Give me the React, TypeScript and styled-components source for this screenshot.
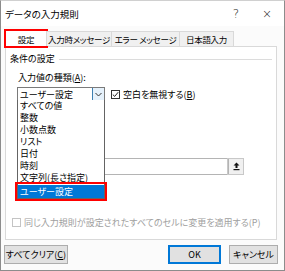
import React from 'react';
import styled, { createGlobalStyle } from 'styled-components';

const GlobalStyle = createGlobalStyle`
  html, body { margin: 0; padding: 0; background: #fff; }
  body {
    font-family: "Noto Sans CJK JP", "Noto Sans", sans-serif;
    font-size: 9px;
    color: #000;
    font-feature-settings: "palt";
  }
`;

const Dialog = styled.div`
  width: 285px;
  height: 271px;
  box-sizing: border-box;
  border: 1px solid #8c8c8c;
  border-top-color: #d0d0d0;
  background: #fbfbfb;
  display: flex;
  flex-direction: column;
`;

const TitleBar = styled.div`
  height: 25px;
  background: #fff;
  display: flex;
  align-items: center;
  padding-left: 4px;
  font-size: 9.5px;
`;

const TitleText = styled.div`
  flex: 1;
`;

const TitleButton = styled.div<{ $w: number }>`
  width: ${p => p.$w}px;
  text-align: center;
  font-size: 12px;
  font-family: "DejaVu Sans", sans-serif;
  font-weight: 300;
  color: #222;
`;

const TabRow = styled.div`
  height: 20px;
  display: flex;
  align-items: flex-end;
  padding-left: 5px;
  position: relative;
  z-index: 1;
`;

const Tab = styled.div<{ $w: number; $active?: boolean }>`
  width: ${p => p.$w}px;
  height: ${p => (p.$active ? 17 : 15)}px;
  box-sizing: border-box;
  display: flex;
  align-items: center;
  justify-content: center;
  background: ${p => (p.$active ? '#fff' : '#f0f0f0')};
  border: 1px solid #d9d9d9;
  border-bottom: none;
  margin-bottom: ${p => (p.$active ? -1 : 0)}px;
  margin-left: -1px;
  white-space: nowrap;
  font-size: 8.5px;
  letter-spacing: -0.3px;
  outline: ${p => (p.$active ? '2px solid #f00' : 'none')};
  outline-offset: -1px;
`;

const Panel = styled.div`
  margin-left: 4px;
  width: 272px;
  height: 194px;
  box-sizing: border-box;
  background: #fff;
  border: 1px solid #d9d9d9;
  position: relative;
  display: flex;
  flex-direction: column;
`;

const GroupTitle = styled.div`
  display: flex;
  align-items: center;
  margin-top: 6px;
  padding: 0 4px;
  line-height: 12px;
  &::after {
    content: '';
    flex: 1;
    height: 1px;
    background: #dcdcdc;
    margin-left: 4px;
  }
`;

const Label = styled.div`
  margin-top: 7px;
  padding-left: 12px;
  line-height: 12px;
`;

const Key = styled.span`
  text-decoration: underline;
`;

const ComboRow = styled.div`
  display: flex;
  align-items: center;
  margin-top: 3px;
  padding-left: 11px;
  gap: 6px;
`;

const Combo = styled.div`
  width: 88px;
  height: 14px;
  box-sizing: border-box;
  border: 1px solid #7a7a7a;
  display: flex;
  align-items: center;
  position: relative;
`;

const ComboText = styled.div`
  flex: 1;
  padding-left: 2px;
`;

const ComboArrow = styled.div`
  width: 12px;
  height: 12px;
  box-sizing: border-box;
  background: #e5f1fb;
  border-left: 1px solid #3c7fb1;
  display: flex;
  align-items: center;
  justify-content: center;
`;

const CheckRow = styled.label<{ $disabled?: boolean }>`
  display: flex;
  align-items: center;
  gap: 3px;
  white-space: nowrap;
  color: ${p => (p.$disabled ? '#a0a0a0' : '#000')};
`;

const Box = styled.span<{ $disabled?: boolean }>`
  width: 9px;
  height: 9px;
  box-sizing: border-box;
  border: 1px solid ${p => (p.$disabled ? '#c4c4c4' : '#333')};
  background: #fff;
  display: flex;
  align-items: center;
  justify-content: center;
`;

const DropList = styled.div`
  position: absolute;
  left: 11px;
  top: 53px;
  width: 88px;
  box-sizing: border-box;
  border: 1px solid #646464;
  border-top: none;
  background: #fff;
  z-index: 2;
`;

const ListItem = styled.div<{ $selected?: boolean }>`
  height: 12px;
  line-height: 12px;
  padding-left: 2px;
  white-space: nowrap;
  background: ${p => (p.$selected ? '#0078d7' : 'transparent')};
  color: ${p => (p.$selected ? '#fff' : '#000')};
  outline: ${p => (p.$selected ? '2px solid #f00' : 'none')};
  outline-offset: 1px;
  position: relative;
  ${p => (p.$selected ? 'margin-top: 1px; height: 13px; line-height: 13px;' : '')}
`;

const SourceInput = styled.div`
  margin-top: 57px;
  margin-left: 11px;
  width: 227px;
  height: 17px;
  box-sizing: border-box;
  border: 1px solid #b4b4b4;
  display: flex;
  justify-content: flex-end;
  align-items: stretch;
`;

const RefButton = styled.div`
  width: 15px;
  box-sizing: border-box;
  border-left: 1px solid #b4b4b4;
  background: #f0f0f0;
  outline: 1px solid #c8c8c8;
  display: flex;
  align-items: center;
  justify-content: center;
`;

const ApplyRow = styled.div`
  margin-top: auto;
  margin-bottom: 10px;
  padding-left: 6px;
`;

const Footer = styled.div`
  display: flex;
  align-items: center;
  gap: 8px;
  padding: 5px 6px 0 3px;
`;

const Button = styled.div<{ $w: number; $default?: boolean }>`
  width: ${p => p.$w}px;
  height: 19px;
  box-sizing: border-box;
  border: 1px solid ${p => (p.$default ? '#0078d7' : '#adadad')};
  background: #e1e1e1;
  display: flex;
  align-items: center;
  justify-content: center;
  white-space: nowrap;
  box-shadow: ${p => (p.$default ? 'inset 0 0 0 1px #0078d7' : 'none')};
`;

const Spacer = styled.div`
  flex: 1;
`;

const Check = () => (
  <svg width="7" height="7" viewBox="0 0 7 7">
    <path d="M0.8 3.6 L2.7 5.4 L6.2 1.2" fill="none" stroke="#222" strokeWidth="1" />
  </svg>
);

const Chevron = () => (
  <svg width="7" height="5" viewBox="0 0 7 5">
    <path d="M0.5 1 L3.5 4 L6.5 1" fill="none" stroke="#333" strokeWidth="1" />
  </svg>
);

const CollapseIcon = () => (
  <svg width="7" height="9" viewBox="0 0 7 9">
    <path d="M3.5 0.5 L6.5 3.5 L4.5 3.5 L4.5 6 L2.5 6 L2.5 3.5 L0.5 3.5 Z" fill="#111" />
    <rect x="0.5" y="7" width="6" height="1.2" fill="#111" />
  </svg>
);

const types = ['すべての値', '整数', '小数点数', 'リスト', '日付', '時刻', '文字列(長さ指定)', 'ユーザー設定'];

const App = () => {
  return (
    <>
      <GlobalStyle />
      <Dialog>
        <TitleBar>
          <TitleText>データの入力規則</TitleText>
          <TitleButton $w={28}>?</TitleButton>
          <TitleButton $w={34}>×</TitleButton>
        </TitleBar>
        <TabRow>
          <Tab $w={42} $active>設定</Tab>
          <Tab $w={66}>入力時メッセージ</Tab>
          <Tab $w={69}>エラー メッセージ</Tab>
          <Tab $w={55}>日本語入力</Tab>
        </TabRow>
        <Panel>
          <GroupTitle>条件の設定</GroupTitle>
          <Label>
            入力値の種類(<Key>A</Key>):
          </Label>
          <ComboRow>
            <Combo>
              <ComboText>ユーザー設定</ComboText>
              <ComboArrow>
                <Chevron />
              </ComboArrow>
            </Combo>
            <CheckRow>
              <Box>
                <Check />
              </Box>
              <span>
                空白を無視する(<Key>B</Key>)
              </span>
            </CheckRow>
          </ComboRow>
          <DropList>
            {types.map(t => (
              <ListItem key={t} $selected={t === 'ユーザー設定'}>
                {t}
              </ListItem>
            ))}
          </DropList>
          <SourceInput>
            <RefButton>
              <CollapseIcon />
            </RefButton>
          </SourceInput>
          <ApplyRow>
            <CheckRow $disabled>
              <Box $disabled />
              同じ入力規則が設定されたすべてのセルに変更を適用する(P)
            </CheckRow>
          </ApplyRow>
        </Panel>
        <Footer>
          <Button $w={64}>
            すべてクリア(<Key>C</Key>)
          </Button>
          <Spacer />
          <Button $w={53} $default>
            OK
          </Button>
          <Button $w={49}>キャンセル</Button>
        </Footer>
      </Dialog>
    </>
  );
};

export default App;
